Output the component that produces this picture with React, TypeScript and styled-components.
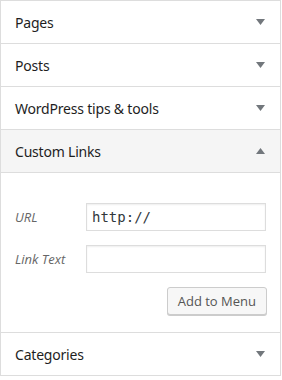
import React from "react";
import styled, { createGlobalStyle } from "styled-components";

const GlobalStyle = createGlobalStyle`
  body {
    margin: 0;
    background: #ffffff;
    font-family: "Open Sans", "Noto Sans", sans-serif;
    color: #23282d;
  }
`;

const sections = ["Pages", "Posts", "WordPress tips & tools"];

const Arrow = ({ up }: { up?: boolean }) => (
  <svg width="9" height="6" viewBox="0 0 9 6">
    <path d={up ? "M0 6 L4.5 0 L9 6 Z" : "M0 0 L9 0 L4.5 6 Z"} fill="#72777c" />
  </svg>
);

const App = () => {
  return (
    <>
      <GlobalStyle />
      <Panel>
        {sections.map((title) => (
          <Section key={title}>
            <Title>{title}</Title>
            <Arrow />
          </Section>
        ))}
        <Section open>
          <Title>Custom Links</Title>
          <Arrow up />
        </Section>
        <Body>
          <Field>
            <Label>URL</Label>
            <Input defaultValue="http://" mono />
          </Field>
          <Field>
            <Label>Link Text</Label>
            <Input defaultValue="" />
          </Field>
          <Actions>
            <Button>Add to Menu</Button>
          </Actions>
        </Body>
        <Section>
          <Title>Categories</Title>
          <Arrow />
        </Section>
      </Panel>
    </>
  );
};

export default App;

const Panel = styled.div`
  width: 279px;
  border: 1px solid #dddddd;
  border-bottom: none;
`;

const Section = styled.div<{ open?: boolean }>`
  display: flex;
  align-items: center;
  justify-content: space-between;
  height: 42px;
  padding: 0 15px 0 14px;
  border-bottom: 1px solid #dddddd;
  background: ${({ open }) => (open ? "#f5f5f5" : "#ffffff")};
`;

const Title = styled.h3`
  margin: 0;
  font-family: "Noto Sans", "Open Sans", sans-serif;
  font-size: 14px;
  font-weight: 450;
  letter-spacing: -0.2px;
  color: #1e1e1e;
`;

const Body = styled.div`
  display: flex;
  flex-direction: column;
  height: 160px;
  box-sizing: border-box;
  padding: 30px 13px 0 14px;
  border-bottom: 1px solid #dddddd;
`;

const Field = styled.div`
  display: flex;
  align-items: center;
  margin-bottom: 14px;
`;

const Label = styled.label`
  width: 71px;
  font-size: 13px;
  font-style: italic;
  color: #666666;
`;

const Input = styled.input<{ mono?: boolean }>`
  width: 180px;
  height: 28px;
  box-sizing: border-box;
  padding: 0 5px;
  border: 1px solid #dddddd;
  box-shadow: inset 0 1px 2px rgba(0, 0, 0, 0.07);
  font-family: ${({ mono }) =>
    mono ? '"DejaVu Sans Mono", monospace' : '"Open Sans", sans-serif'};
  font-size: 14px;
  color: #32373c;
  outline: none;
`;

const Actions = styled.div`
  display: flex;
  justify-content: flex-end;
`;

const Button = styled.button`
  height: 28px;
  padding: 0 10px;
  border: 1px solid #cccccc;
  border-radius: 3px;
  background: #f7f7f7;
  box-shadow: 0 1px 0 #cccccc;
  font-family: "Open Sans", sans-serif;
  font-size: 13px;
  color: #555555;
`;
